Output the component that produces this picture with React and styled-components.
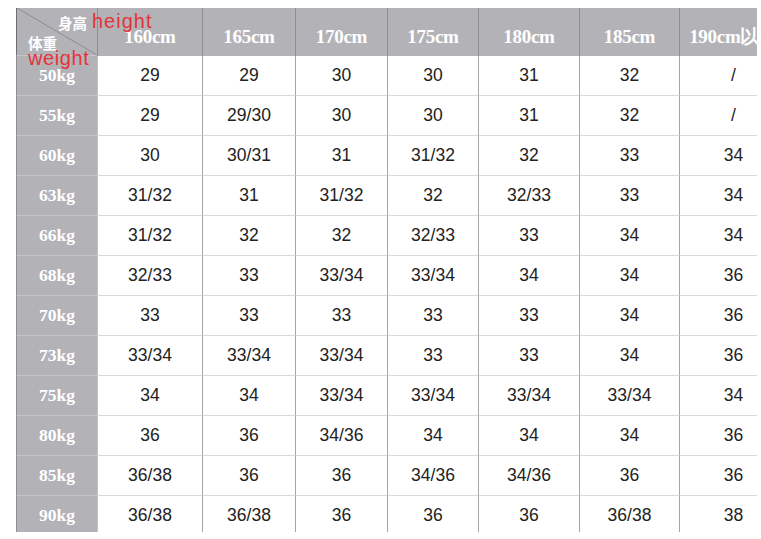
import styled, { createGlobalStyle } from 'styled-components';

const GlobalStyle = createGlobalStyle`
  html, body {
    margin: 0;
    padding: 0;
    background: #fff;
  }
  body {
    font-family: "Liberation Sans", Arial, sans-serif;
  }
`

const HEIGHTS = ['160cm', '165cm', '170cm', '175cm', '180cm', '185cm', '190cm以上']
const COLS = [81, 105, 93, 92, 91, 101, 100, 108]

const ROWS = [
    ['50kg', '29', '29', '30', '30', '31', '32', '/'],
    ['55kg', '29', '29/30', '30', '30', '31', '32', '/'],
    ['60kg', '30', '30/31', '31', '31/32', '32', '33', '34'],
    ['63kg', '31/32', '31', '31/32', '32', '32/33', '33', '34'],
    ['66kg', '31/32', '32', '32', '32/33', '33', '34', '34'],
    ['68kg', '32/33', '33', '33/34', '33/34', '34', '34', '36'],
    ['70kg', '33', '33', '33', '33', '33', '34', '36'],
    ['73kg', '33/34', '33/34', '33/34', '33', '33', '34', '36'],
    ['75kg', '34', '34', '33/34', '33/34', '33/34', '33/34', '34'],
    ['80kg', '36', '36', '34/36', '34', '34', '34', '36'],
    ['85kg', '36/38', '36', '36', '34/36', '34/36', '36', '36'],
    ['90kg', '36/38', '36/38', '36', '36', '36', '36/38', '38'],
]

const Page = styled.div`
    padding: 8px 0 0 16px;
`

const Frame = styled.div`
    width: 741px;
    height: 524px;
    overflow: hidden;
`

const Grid = styled.div`
    display: grid;
    grid-template-columns: ${COLS.map(c => c + 'px').join(' ')};
    grid-template-rows: 48px repeat(12, 40px);
    width: max-content;
`

const HeadCell = styled.div`
    background: #b3b3b7;
    color: #fff;
    font-family: "Liberation Serif", "Times New Roman", serif;
    font-weight: bold;
    font-size: 19px;
    display: flex;
    align-items: center;
    justify-content: center;
    padding-top: 10px;
    box-sizing: border-box;
    border-left: 1px solid #8e8e92;
    white-space: nowrap;
    letter-spacing: -0.3px;
`

const Corner = styled.div`
    position: relative;
    background: #b3b3b7;
    border-left: 1px solid #707074;
    border-bottom: 1px solid #c4c4c8;
    z-index: 2;
    display: flex;
    flex-direction: column;
    padding-top: 3px;
    box-sizing: border-box;
`

const Diagonal = styled.svg`
    position: absolute;
    inset: 0;
    width: 100%;
    height: 100%;
`

const TopLine = styled.div`
    display: flex;
    align-items: flex-end;
    gap: 5px;
    padding-left: 41px;
    white-space: nowrap;
`

const BottomLine = styled.div`
    display: flex;
    flex-direction: column;
    padding-left: 11px;
    margin-top: 4px;
`

const CnLabel = styled.span`
    color: #fff;
    font-family: "Noto Sans CJK SC", "Liberation Serif", serif;
    font-weight: bold;
    font-size: 14.5px;
    line-height: 16px;
    position: relative;
`

const RedLabel = styled.span`
    color: #e4323b;
    font-family: "Liberation Sans", Arial, sans-serif;
    font-size: 20px;
    line-height: 20px;
    margin-top: ${p => p.$shift}px;
    letter-spacing: ${p => p.$ls}px;
    white-space: nowrap;
    position: relative;
`

const RowHead = styled.div`
    background: #b3b3b7;
    color: #fff;
    font-family: "Liberation Serif", "Times New Roman", serif;
    font-weight: bold;
    font-size: 17.5px;
    display: flex;
    align-items: center;
    justify-content: center;
    border-left: 1px solid #8e8e92;
    border-bottom: 1px solid #c4c4c8;
    box-sizing: border-box;
`

const Cell = styled.div`
    background: #fff;
    color: #222;
    font-size: 17.5px;
    display: flex;
    align-items: center;
    justify-content: center;
    border-left: 1px solid ${p => (p.$first ? '#c4c4c8' : '#a4a4a4')};
    border-bottom: 1px solid #d9d9d9;
    box-sizing: border-box;
`

export default function App() {
    return <Page>
        <GlobalStyle />
        <Frame>
            <Grid>
                <Corner>
                    <Diagonal viewBox="0 0 81 48" preserveAspectRatio="none">
                        <line x1="0" y1="0" x2="81" y2="48" stroke="#8c8c90" strokeWidth="1" />
                    </Diagonal>
                    <TopLine>
                        <CnLabel>身高</CnLabel>
                        <RedLabel $ls={1} $shift={0}>height</RedLabel>
                    </TopLine>
                    <BottomLine>
                        <CnLabel>体重</CnLabel>
                        <RedLabel $ls={0.6} $shift={-3}>weight</RedLabel>
                    </BottomLine>
                </Corner>
                {HEIGHTS.map(h => <HeadCell key={h}>{h}</HeadCell>)}
                {ROWS.map(([label, ...vals]) => [
                    <RowHead key={label}>{label}</RowHead>,
                    ...vals.map((v, i) => <Cell key={label + i} $first={i === 0}>{v}</Cell>)
                ])}
            </Grid>
        </Frame>
    </Page>
}
